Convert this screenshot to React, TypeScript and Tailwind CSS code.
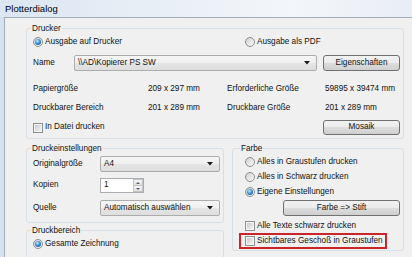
import React from "react";

const Radio = ({ checked = false }: { checked?: boolean }) => (
  <span className="flex h-[10px] w-[10px] shrink-0 items-center justify-center rounded-full border border-[#8e8f8f] bg-[linear-gradient(135deg,#cfcfcf,#fbfbfb)]">
    {checked && (
      <span className="h-[6px] w-[6px] rounded-full bg-[radial-gradient(circle_at_40%_35%,#c4f0ff_0%,#3a8fda_45%,#0d3c82_100%)]" />
    )}
  </span>
);

const Check = () => (
  <span className="flex h-[10px] w-[10px] shrink-0 items-center justify-center border border-[#8e8f8f] bg-[#f6f6f6]">
    <span className="h-[6px] w-[6px] bg-[linear-gradient(135deg,#c6cad0,#f4f4f4)]" />
  </span>
);

const Arrow = () => (
  <svg width="6" height="4" viewBox="0 0 6 4" className="shrink-0">
    <polygon points="0,0 6,0 3,3.5" fill="#1a1a1a" />
  </svg>
);

const Btn = ({ children, className = "" }: { children: React.ReactNode; className?: string }) => (
  <div
    className={`flex items-center justify-center rounded-[3px] border border-[#707070] bg-[linear-gradient(#f2f2f2_0%,#ebebeb_50%,#dddddd_50%,#cfcfcf_100%)] ${className}`}
  >
    {children}
  </div>
);

const Select = ({ value, className = "" }: { value: string; className?: string }) => (
  <div
    className={`flex h-[16px] items-center justify-between rounded-[2px] border border-[#acacac] bg-[linear-gradient(#f6f6f6_0%,#efefef_50%,#e5e5e5_50%,#dedede_100%)] pl-[3px] pr-[6px] ${className}`}
  >
    <span>{value}</span>
    <Arrow />
  </div>
);

export default function App() {
  return (
    <div className="flex h-[257px] w-[412px] flex-col overflow-hidden whitespace-nowrap bg-[#d5e2f0] font-['Liberation_Sans',Arial,sans-serif] text-[8.2px] leading-none text-[#111]">
      <div className="flex h-[17px] shrink-0 items-center bg-[linear-gradient(90deg,#dbe6f2_0%,#e9eff6_40%,#f3f6fa_70%,#e9eef5_100%)] pl-[5px] text-[9.5px] text-black">
        Plotterdialog
      </div>
      <div className="ml-[4px] flex flex-1 flex-col border-l border-t border-[#a3adb8] bg-[#f0f0f0] pl-[21px] pr-[8px] pt-[4px]">
        {/* Drucker */}
        <fieldset className="rounded-[3px] border border-[#d5dfe5] pb-[3px] pl-[6px] pr-[3px]">
          <legend className="-ml-[2px] px-[1px] leading-[13px]">Drucker</legend>
          <div className="flex h-[14px] items-center">
            <div className="flex w-[212px] items-center gap-[2px]">
              <Radio checked />
              <span>Ausgabe auf Drucker</span>
            </div>
            <div className="flex items-center gap-[2px]">
              <Radio />
              <span>Ausgabe als PDF</span>
            </div>
          </div>
          <div className="mt-[6px] flex h-[16px] items-center">
            <span className="w-[41px]">Name</span>
            <Select value="\\AD\Kopierer PS SW" className="flex-1" />
            <Btn className="ml-[6px] h-[16px] w-[77px]">Eigenschaften</Btn>
          </div>
          <div className="mt-[11px] flex h-[14px] items-center">
            <span className="w-[115px]">Papiergröße</span>
            <span className="w-[79px]">209 x 297 mm</span>
            <span className="w-[98px]">Erforderliche Größe</span>
            <span>59895 x 39474 mm</span>
          </div>
          <div className="mt-[5px] flex h-[14px] items-center">
            <span className="w-[115px]">Druckbarer Bereich</span>
            <span className="w-[79px]">201 x 289 mm</span>
            <span className="w-[98px]">Druckbare Größe</span>
            <span>201 x 289 mm</span>
          </div>
          <div className="mt-[5px] flex h-[15px] items-center">
            <div className="flex items-center gap-[2px]">
              <Check />
              <span>In Datei drucken</span>
            </div>
            <Btn className="ml-auto h-[15px] w-[77px]">Mosaik</Btn>
          </div>
        </fieldset>

        <div className="mt-[3px] flex items-start gap-[8px]">
          {/* left column */}
          <div className="flex w-[198px] shrink-0 flex-col">
            <fieldset className="rounded-[3px] border border-[#d5dfe5] pb-[6px] pl-[6px] pr-[3px]">
              <legend className="-ml-[2px] px-[1px] leading-[13px]">Druckeinstellungen</legend>
              <div className="mt-[1px] flex h-[16px] items-center">
                <span className="w-[67px]">Originalgröße</span>
                <Select value="A4" className="flex-1" />
              </div>
              <div className="mt-[6px] flex h-[15px] items-center">
                <span className="w-[67px]">Kopien</span>
                <div className="flex h-[15px] w-[44px] border border-[#abadb3] bg-white">
                  <span className="flex flex-1 items-center pl-[3px]">1</span>
                  <div className="flex w-[10px] flex-col">
                    <div className="flex flex-1 items-center justify-center border border-[#c3c3c3] bg-[linear-gradient(#f6f6f6,#e2e2e2)]">
                      <svg width="4" height="2" viewBox="0 0 4 2">
                        <polygon points="0,2 4,2 2,0" fill="#4d6185" />
                      </svg>
                    </div>
                    <div className="flex flex-1 items-center justify-center border border-t-0 border-[#c3c3c3] bg-[linear-gradient(#f6f6f6,#e2e2e2)]">
                      <svg width="4" height="2" viewBox="0 0 4 2">
                        <polygon points="0,0 4,0 2,2" fill="#4d6185" />
                      </svg>
                    </div>
                  </div>
                </div>
              </div>
              <div className="mt-[7px] flex h-[16px] items-center">
                <span className="w-[67px]">Quelle</span>
                <Select value="Automatisch auswählen" className="flex-1" />
              </div>
            </fieldset>
            <fieldset className="mt-[1px] rounded-[3px] border border-[#d5dfe5] pb-[20px] pl-[6px] pr-[3px]">
              <legend className="-ml-[2px] px-[1px] leading-[13px]">Druckbereich</legend>
              <div className="flex h-[14px] items-center gap-[2px]">
                <Radio checked />
                <span>Gesamte Zeichnung</span>
              </div>
            </fieldset>
          </div>

          {/* Farbe */}
          <fieldset className="flex-1 rounded-[3px] border border-[#d5dfe5] pb-[1px] pl-[12px] pr-[3px]">
            <legend className="-ml-[5px] px-[1px] leading-[13px]">Farbe</legend>
            <div className="flex h-[14px] items-center gap-[2px]">
              <Radio />
              <span>Alles in Graustufen drucken</span>
            </div>
            <div className="mt-[1px] flex h-[14px] items-center gap-[2px]">
              <Radio />
              <span>Alles in Schwarz drucken</span>
            </div>
            <div className="mt-[1px] flex h-[14px] items-center gap-[2px]">
              <Radio checked />
              <span>Eigene Einstellungen</span>
            </div>
            <Btn className="ml-[38px] mt-[1px] h-[16px]">Farbe =&gt; Stift</Btn>
            <div className="mt-[3px] flex h-[14px] items-center gap-[2px]">
              <Check />
              <span>Alle Texte schwarz drucken</span>
            </div>
            <div className="-ml-[6px] flex h-[16px] w-[148px] items-center gap-[2px] border-2 border-[#c8262a] pl-[4px]">
              <Check />
              <span>Sichtbares Geschoß in Graustufen</span>
            </div>
          </fieldset>
        </div>
      </div>
    </div>
  );
}
